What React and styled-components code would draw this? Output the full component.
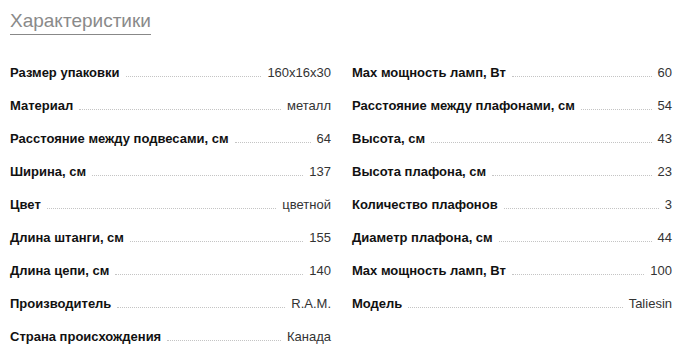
import React from 'react'
import styled, { createGlobalStyle } from 'styled-components'

const GlobalStyle = createGlobalStyle`
  body {
    margin: 0;
    background: #fff;
    font-family: "Liberation Sans", Arial, sans-serif;
  }
`

const Wrapper = styled.div`
  padding: 10px 17px 0 10px;
  width: 662px;
`

const Title = styled.h2`
  display: inline-block;
  margin: 0;
  padding: 0 0 3px;
  font-size: 19px;
  font-weight: normal;
  line-height: 21px;
  color: #8a8a8a;
  border-bottom: 1px solid #888;
`

const Columns = styled.div`
  display: grid;
  grid-template-columns: 321px 320px;
  column-gap: 21px;
  margin-top: 21px;
`

const Column = styled.div`
  display: flex;
  flex-direction: column;
`

const Row = styled.div`
  display: flex;
  align-items: baseline;
  height: 33px;
  padding-top: 8px;
  box-sizing: border-box;
  font-size: 13px;
  line-height: 17px;
`

const Label = styled.span`
  font-weight: bold;
  color: #111;
`

const Leader = styled.span`
  flex: 1;
  margin: 0 6px;
  border-bottom: 1px dotted #c4c4c4;
`

const Value = styled.span`
  color: #333;
`

const left = [
  ['Размер упаковки', '160x16x30'],
  ['Материал', 'металл'],
  ['Расстояние между подвесами, см', '64'],
  ['Ширина, см', '137'],
  ['Цвет', 'цветной'],
  ['Длина штанги, см', '155'],
  ['Длина цепи, см', '140'],
  ['Производитель', 'R.A.M.'],
  ['Страна происхождения', 'Канада'],
]

const right = [
  ['Max мощность ламп, Вт', '60'],
  ['Расстояние между плафонами, см', '54'],
  ['Высота, см', '43'],
  ['Высота плафона, см', '23'],
  ['Количество плафонов', '3'],
  ['Диаметр плафона, см', '44'],
  ['Max мощность ламп, Вт', '100'],
  ['Модель', 'Taliesin'],
]

function SpecList({ items }) {
  return (
    <Column>
      {items.map(([name, value], i) => (
        <Row key={i}>
          <Label>{name}</Label>
          <Leader />
          <Value>{value}</Value>
        </Row>
      ))}
    </Column>
  )
}

export default function App() {
  return (
    <Wrapper>
      <GlobalStyle />
      <Title>Характеристики</Title>
      <Columns>
        <SpecList items={left} />
        <SpecList items={right} />
      </Columns>
    </Wrapper>
  )
}
